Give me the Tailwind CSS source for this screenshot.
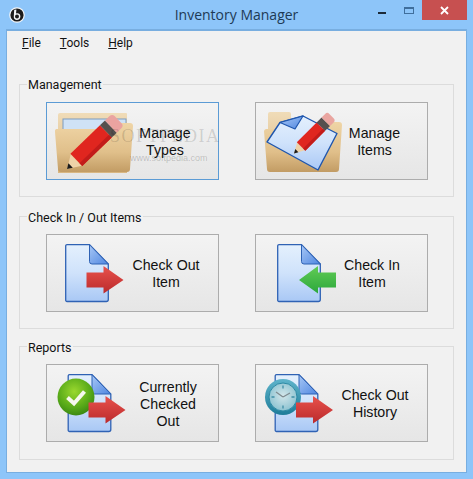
<!DOCTYPE html>
<html lang="en">
<head>
  <meta charset="UTF-8" />
  <title>Inventory Manager</title>
  <script src="https://cdn.jsdelivr.net/npm/@tailwindcss/browser@4"></script>
</head>
<body class="bg-[#8dc5f9]">
  <!-- shared icon parts -->
  <svg class="absolute w-0 h-0" aria-hidden="true">
    <defs>
      <linearGradient id="docFill" x1="0" y1="0" x2="0" y2="1"><stop offset="0" stop-color="#e4f0fd"/><stop offset="0.5" stop-color="#cfe2fb"/><stop offset="1" stop-color="#a9c8f5"/></linearGradient>
      <linearGradient id="foldFill" x1="0" y1="0" x2="1" y2="1"><stop offset="0" stop-color="#a8c8f6"/><stop offset="1" stop-color="#4f86e0"/></linearGradient>
      <linearGradient id="redFill" x1="0" y1="0" x2="0" y2="1"><stop offset="0" stop-color="#e8524c"/><stop offset="1" stop-color="#bb2a2c"/></linearGradient>
      <linearGradient id="greenFill" x1="0" y1="0" x2="0" y2="1"><stop offset="0" stop-color="#62cc55"/><stop offset="1" stop-color="#2ba73c"/></linearGradient>
      <linearGradient id="folderFront" x1="0" y1="0" x2="0" y2="1"><stop offset="0" stop-color="#efd5a6"/><stop offset="0.6" stop-color="#e0bf8a"/><stop offset="1" stop-color="#c29c64"/></linearGradient>
      <linearGradient id="folderBack" x1="0" y1="0" x2="0" y2="1"><stop offset="0" stop-color="#f0dcb8"/><stop offset="1" stop-color="#d9b681"/></linearGradient>
      <radialGradient id="ballFill" cx="0.45" cy="0.35" r="0.75"><stop offset="0" stop-color="#9ad82e"/><stop offset="0.6" stop-color="#56a818"/><stop offset="1" stop-color="#2f7a10"/></radialGradient>
      <radialGradient id="clockFace" cx="0.5" cy="0.45" r="0.6"><stop offset="0" stop-color="#d3e6ea"/><stop offset="1" stop-color="#86c0cf"/></radialGradient>
      <linearGradient id="clockRing" x1="0" y1="0" x2="0" y2="1"><stop offset="0" stop-color="#5fb4cb"/><stop offset="1" stop-color="#1d7c99"/></linearGradient>
      <symbol id="doc" viewBox="0 0 44 58" overflow="visible">
        <path d="M2 0.7H24.5L43.3 20V55.5a2 2 0 0 1-2 2H2a1.3 1.3 0 0 1-1.3-1.3V2a1.3 1.3 0 0 1 1.3-1.3Z" fill="url(#docFill)" stroke="#2f62b4" stroke-width="1.3"/>
        <path d="M24.5 0.7L43.3 20H27a2.5 2.5 0 0 1-2.5-2.5Z" fill="url(#foldFill)" stroke="#2f62b4" stroke-width="1"/>
      </symbol>
      <symbol id="arrowRed" viewBox="0 0 37 28" overflow="visible">
        <path d="M0 6.5H17V0L37 14L17 27.5V21.5H0Z" fill="url(#redFill)"/>
      </symbol>
      <symbol id="arrowGreen" viewBox="0 0 37 28" overflow="visible">
        <path d="M37 6.5H19V0L0 14L19 27.5V21.5H37Z" fill="url(#greenFill)"/>
      </symbol>
    </defs>
  </svg>

  <div class="w-[473px] h-[479px] overflow-hidden flex flex-col bg-[#8dc5f9] font-['Liberation_Sans',Arial,sans-serif] text-[#111]">
    <!-- title bar -->
    <div class="relative h-[30px] shrink-0 flex items-center justify-center">
      <svg class="absolute left-[9px] top-[7px]" width="16" height="16" viewBox="0 0 16 16">
        <circle cx="8" cy="8" r="7.8" fill="#f4f6f8"/>
        <circle cx="8" cy="8" r="6.6" fill="#1c1c1c"/>
        <path d="M5.2 2.8L7.4 2.4L7 6.6C9 5.8 11.4 6.8 11.4 9.4C11.4 11.6 9.6 13 7.8 13C6 13 4.6 11.6 4.8 9.6Z" fill="#f4f6f8"/>
        <circle cx="8" cy="9.6" r="2" fill="#1c1c1c"/>
      </svg>
      <span class="text-[14px] text-[#1d3a55] font-['Open_Sans',sans-serif] leading-none">Inventory Manager</span>
      <div class="absolute left-[378px] top-[12px] w-[8px] h-[2px] bg-[#1c2a38]"></div>
      <div class="absolute left-[404px] top-[7px] w-[10px] h-[7px] border border-[#3f6e9c] border-t-2"></div>
      <div class="absolute left-[422px] top-0 w-[45px] h-[20px] bg-[#c75050] flex items-center justify-center">
        <svg width="9" height="9" viewBox="0 0 9 9"><path d="M1 1L8 8M8 1L1 8" stroke="#fff" stroke-width="1.8"/></svg>
      </div>
    </div>

    <!-- client area -->
    <div class="relative mx-[7px] h-[442px] shrink-0 bg-[#f1f1f1] border-t border-[#78aee0] outline outline-[#78aee0] flex flex-col">
      <div class="flex h-[24px] items-center pl-[15px] gap-[19px] text-[12px] font-['Roboto',sans-serif]">
        <span><span class="underline">F</span>ile</span>
        <span><span class="underline">T</span>ools</span>
        <span><span class="underline">H</span>elp</span>
      </div>

      <!-- Management -->
      <section class="relative ml-[12px] mt-[29px] w-[435px] h-[113px] shrink-0 border border-[#dcdcdc] pt-[17px] pl-[26px] flex gap-[36px]">
        <span class="absolute -top-[8px] left-[7px] bg-[#f1f1f1] px-[1px] text-[12.5px] leading-[15px] font-['Roboto',sans-serif]">Management</span>

        <button class="w-[173px] h-[78px] flex items-center border border-[#5b9bd5] bg-linear-to-b from-[#f3f3f3] to-[#e6e6e6]">
          <svg class="shrink-0 -ml-px overflow-visible" width="84" height="76" viewBox="0 0 84 76">
            <path d="M12 70V12a2 2 0 0 1 2-2H80a1 1 0 0 1 1 1V70Z" fill="url(#folderBack)"/>
            <rect x="17" y="16" width="63" height="22" fill="#cfe2f6" stroke="#7d9cc0"/>
            <path d="M10 26H62L70 20H84a3 3 0 0 1 3 3L84 66a3 3 0 0 1-3 3H15a3 3 0 0 1-3-3L9 29a3 3 0 0 1 1-3Z" fill="url(#folderFront)"/>
            <g transform="translate(21 66) rotate(-44)">
              <path d="M0 0L13-8V8Z" fill="#eed2a8"/>
              <path d="M0 0L5-3.2V3.2Z" fill="#1b1b1b"/>
              <path d="M13-8.5H54V8.5H13Z" fill="#e0261f"/>
              <path d="M13 4.5H54V8.5H13Z" fill="#c21c1a"/>
              <path d="M54-8.5H61V8.5H54Z" fill="#55504e"/>
              <path d="M61-8.5H67Q71-8.5 71-5V5Q71 8.5 67 8.5H61Z" fill="#eaa3a0"/>
            </g>
          </svg>
          <span class="w-[70px] pt-[2px] text-center text-[14.2px] leading-[17px]">Manage<br />Types</span>
        </button>

        <button class="w-[173px] h-[78px] flex items-center border border-[#acacac] bg-linear-to-b from-[#f3f3f3] to-[#e6e6e6]">
          <svg class="shrink-0 -ml-px overflow-visible" width="84" height="76" viewBox="0 0 84 76">
            <path d="M13 68V11a2 2 0 0 1 2-2H34a2 2 0 0 1 2 2V40H80V68Z" fill="url(#folderBack)"/>
            <path d="M55 19H84a3 3 0 0 1 3 3L84 66a3 3 0 0 1-3 3H15a3 3 0 0 1-3-3L9 28a3 3 0 0 1 2-2H40Z" fill="url(#folderFront)"/>
            <path d="M12 39L25 19.5L48 13L82 30.5L63 67Z" fill="url(#docFill)" stroke="#1f56ad" stroke-width="1.4" stroke-linejoin="round"/>
            <path d="M25 19.5L40 26L48 13Z" fill="url(#foldFill)" stroke="#1f56ad" stroke-width="1.2" stroke-linejoin="round"/>
            <g transform="translate(39 50.5) rotate(-45)">
              <path d="M0 0L10-5.5V5.5Z" fill="#eed2a8"/>
              <path d="M0 0L4-2.2V2.2Z" fill="#1b1b1b"/>
              <path d="M10-6H38V6H10Z" fill="#e0261f"/>
              <path d="M10 3H38V6H10Z" fill="#c21c1a"/>
              <path d="M38-6H45V6H38Z" fill="#55504e"/>
              <path d="M45-6H50Q53-6 53-3V3Q53 6 50 6H45Z" fill="#e9a5a0"/>
            </g>
          </svg>
          <span class="w-[71px] pt-[2px] text-center text-[14.2px] leading-[17px]">Manage<br />Items</span>
        </button>

        <!-- watermark over the first row -->
        <span class="absolute left-[90px] top-[42px] text-[18px] leading-none tracking-[1.5px] text-black/15 font-['Liberation_Serif',serif]">SOFTPEDIA</span>
        <span class="absolute left-[110px] top-[69px] text-[9px] leading-none text-black/20">www.softpedia.com</span>
      </section>

      <!-- Check In / Out Items -->
      <section class="relative ml-[12px] mt-[19px] w-[435px] h-[113px] shrink-0 border border-[#dcdcdc] pt-[17px] pl-[26px] flex gap-[36px]">
        <span class="absolute -top-[7px] left-[7px] bg-[#f1f1f1] px-[1px] text-[12.5px] leading-[15px] font-['Roboto',sans-serif]">Check In / Out Items</span>

        <button class="w-[173px] h-[78px] flex items-center border border-[#acacac] bg-linear-to-b from-[#f3f3f3] to-[#e6e6e6]">
          <svg class="shrink-0 -ml-px overflow-visible" width="84" height="76" viewBox="0 0 84 76">
            <use href="#doc" x="19" y="9" width="44" height="58"/>
            <use href="#arrowRed" x="40.5" y="31" width="37" height="28"/>
          </svg>
          <span class="w-[72px] pt-[2px] text-center text-[14.2px] leading-[17px] whitespace-nowrap">Check Out<br />Item</span>
        </button>

        <button class="w-[173px] h-[78px] flex items-center border border-[#acacac] bg-linear-to-b from-[#f3f3f3] to-[#e6e6e6]">
          <svg class="shrink-0 -ml-px overflow-visible" width="82" height="76" viewBox="0 0 82 76">
            <use href="#doc" x="22" y="9" width="44" height="58"/>
            <use href="#arrowGreen" x="44" y="31" width="37" height="28"/>
          </svg>
          <span class="w-[70px] pt-[2px] text-center text-[14.2px] leading-[17px] whitespace-nowrap">Check In<br />Item</span>
        </button>
      </section>

      <!-- Reports -->
      <section class="relative ml-[12px] mt-[17px] w-[435px] h-[114px] shrink-0 border border-[#dcdcdc] pt-[17px] pl-[26px] flex gap-[36px]">
        <span class="absolute -top-[7px] left-[7px] bg-[#f1f1f1] px-[1px] text-[12.5px] leading-[15px] font-['Roboto',sans-serif]">Reports</span>

        <button class="w-[173px] h-[78px] flex items-center border border-[#acacac] bg-linear-to-b from-[#f3f3f3] to-[#e6e6e6]">
          <svg class="shrink-0 -ml-px overflow-visible" width="84" height="76" viewBox="0 0 84 76">
            <use href="#doc" x="21.5" y="9" width="44" height="58"/>
            <circle cx="30" cy="32" r="18.5" fill="url(#ballFill)"/>
            <path d="M21.5 32.5L28 38.5L38.5 26.5" fill="none" stroke="#f6f8ee" stroke-width="4"/>
            <use href="#arrowRed" x="42.5" y="31" width="37" height="28"/>
          </svg>
          <span class="w-[76px] pt-[2px] text-center text-[14.2px] leading-[17px]">Currently<br />Checked<br />Out</span>
        </button>

        <button class="w-[173px] h-[78px] flex items-center border border-[#acacac] bg-linear-to-b from-[#f3f3f3] to-[#e6e6e6]">
          <svg class="shrink-0 -ml-px overflow-visible" width="85" height="76" viewBox="0 0 85 76">
            <use href="#doc" x="19.5" y="9" width="44" height="58"/>
            <circle cx="28" cy="32" r="18" fill="url(#clockRing)"/>
            <circle cx="28" cy="32" r="14" fill="url(#clockFace)" stroke="#2d8aa5"/>
            <path d="M28 20.5v3M28 40.5v3M16.5 32h3M36.5 32h3" stroke="#3f8ea6" stroke-width="1.3"/>
            <path d="M28 32L21 27M28 32L35 28" stroke="#7f8b90" stroke-width="1.3"/>
            <use href="#arrowRed" x="41" y="31" width="37" height="28"/>
          </svg>
          <span class="w-[70px] pt-[2px] text-center text-[14.2px] leading-[17px] whitespace-nowrap">Check Out<br />History</span>
        </button>
      </section>
    </div>
  </div>
</body>
</html>
